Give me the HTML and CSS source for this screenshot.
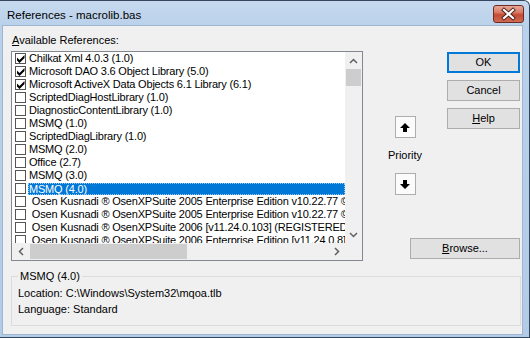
FILE: index.html
```html
<!DOCTYPE html>
<html>
<head>
<meta charset="utf-8">
<link rel="stylesheet" href="styles.css">
</head>
<body>
<div class="window">
  <div class="titlebar">
    <span class="title">References - macrolib.bas</span>
    <div class="close">
      <svg width="29" height="16" viewBox="0 0 29 16"><path d="M10 4 L19 12 M19 4 L10 12" stroke="#4a1d16" stroke-width="4" stroke-linecap="square" fill="none"/><path d="M10 4 L19 12 M19 4 L10 12" stroke="#fff" stroke-width="2.2" stroke-linecap="square" fill="none"/></svg>
    </div>
  </div>
  <div class="client">
    <div class="main">
      <div class="lbl"><u>A</u>vailable References:</div>
      <div class="listbox">
        <div class="items">
          <div class="row"><span class="cb"><svg width="8" height="8" viewBox="0 0 8 8"><polygon points="0,2.5 2.5,5 7.5,0 7.5,3 2.5,8 0,5.5" fill="#000"/></svg></span><span class="txt">Chilkat Xml 4.0.3 (1.0)</span></div>
          <div class="row"><span class="cb"><svg width="8" height="8" viewBox="0 0 8 8"><polygon points="0,2.5 2.5,5 7.5,0 7.5,3 2.5,8 0,5.5" fill="#000"/></svg></span><span class="txt">Microsoft DAO 3.6 Object Library (5.0)</span></div>
          <div class="row"><span class="cb"><svg width="8" height="8" viewBox="0 0 8 8"><polygon points="0,2.5 2.5,5 7.5,0 7.5,3 2.5,8 0,5.5" fill="#000"/></svg></span><span class="txt">Microsoft ActiveX Data Objects 6.1 Library (6.1)</span></div>
          <div class="row"><span class="cb"></span><span class="txt">ScriptedDiagHostLibrary (1.0)</span></div>
          <div class="row"><span class="cb"></span><span class="txt">DiagnosticContentLibrary (1.0)</span></div>
          <div class="row"><span class="cb"></span><span class="txt">MSMQ (1.0)</span></div>
          <div class="row"><span class="cb"></span><span class="txt">ScriptedDiagLibrary (1.0)</span></div>
          <div class="row"><span class="cb"></span><span class="txt">MSMQ (2.0)</span></div>
          <div class="row"><span class="cb"></span><span class="txt">Office (2.7)</span></div>
          <div class="row"><span class="cb"></span><span class="txt">MSMQ (3.0)</span></div>
          <div class="row sel"><span class="cb"></span><span class="txt">MSMQ (4.0)</span></div>
          <div class="row"><span class="cb"></span><span class="txt">&nbsp;Osen Kusnadi ® OsenXPSuite 2005 Enterprise Edition v10.22.77 © Osen Kusnadi (6.0)</span></div>
          <div class="row"><span class="cb"></span><span class="txt">&nbsp;Osen Kusnadi ® OsenXPSuite 2005 Enterprise Edition v10.22.77 © Osen Kusnadi (6.0)</span></div>
          <div class="row"><span class="cb"></span><span class="txt">&nbsp;Osen Kusnadi ® OsenXPSuite 2006 [v11.24.0.103] (REGISTERED) (6.0)</span></div>
          <div class="row"><span class="cb"></span><span class="txt">&nbsp;Osen Kusnadi ® OsenXPSuite 2006 Enterprise Edition [v11.24.0.8] (6.0)</span></div>
        </div>
        <div class="vscroll">
          <div class="sarrow"><svg width="9" height="6" viewBox="0 0 9 6"><polyline points="1,5 4.5,1.5 8,5" stroke="#606060" stroke-width="1.5" fill="none"/></svg></div>
          <div class="vthumb"></div>
          <div class="sarrow end"><svg width="9" height="6" viewBox="0 0 9 6"><polyline points="1,1 4.5,4.5 8,1" stroke="#606060" stroke-width="1.5" fill="none"/></svg></div>
        </div>
        <div class="hscroll">
          <div class="sarrow"><svg width="6" height="9" viewBox="0 0 6 9"><polyline points="5,1 1.5,4.5 5,8" stroke="#606060" stroke-width="1.5" fill="none"/></svg></div>
          <div class="hthumb"></div>
          <div class="sarrow end"><svg width="6" height="9" viewBox="0 0 6 9"><polyline points="1,1 4.5,4.5 1,8" stroke="#606060" stroke-width="1.5" fill="none"/></svg></div>
        </div>
        <div class="corner"></div>
      </div>
      <div class="priority">
        <div class="abtn"><svg width="10" height="9" viewBox="0 0 10 9"><polygon points="5,0 10,5 7,5 7,9 3,9 3,5 0,5" fill="#000"/></svg></div>
        <div class="plabel">Priority</div>
        <div class="abtn"><svg width="10" height="9" viewBox="0 0 10 9"><polygon points="5,9 10,4 7,4 7,0 3,0 3,4 0,4" fill="#000"/></svg></div>
      </div>
      <div class="btns">
        <div class="btn default">OK</div>
        <div class="btn">Cancel</div>
        <div class="btn"><u>H</u>elp</div>
      </div>
      <div class="btn browse"><u>B</u>rowse...</div>
    </div>
    <fieldset class="group">
      <legend>MSMQ (4.0)</legend>
      <div class="line">Location: C:\Windows\System32\mqoa.tlb</div>
      <div class="line">Language: Standard</div>
    </fieldset>
  </div>
</div>
</body>
</html>
```
FILE: styles.css
```css
* { box-sizing: border-box; }
html, body { margin: 0; padding: 0; }
body {
  width: 530px;
  height: 338px;
  overflow: hidden;
  background: #fff;
  font-family: "Liberation Sans", Arial, sans-serif;
  font-size: 11px;
  color: #000;
}
.window {
  width: 530px;
  height: 338px;
  display: flex;
  flex-direction: column;
  background: linear-gradient(180deg, #c6d9ee 0, #b9d1ea 26px, #b2cbe7 100%);
  border: 1px solid #34475d;
  border-left: none;
  border-radius: 0 6px 0 0;
}
.titlebar {
  height: 25px;
  flex: none;
  display: flex;
  align-items: flex-start;
  justify-content: space-between;
}
.title {
  padding: 6px 0 0 7px;
  font-size: 11.5px;
  line-height: 16px;
}
.close {
  margin: 4px 5px 0 0;
  width: 31px;
  height: 18px;
  border: 1px solid #6e2b22;
  border-radius: 3px;
  background: linear-gradient(180deg, #e7a898 0, #d97a66 40%, #c54a33 55%, #cf6b52 100%);
}
.close svg { display: block; }
.client {
  flex: 1;
  margin: 0 7px 3px 3px;
  background: #f0f0f0;
  padding: 8px 1px 0 8px;
  display: flex;
  flex-direction: column;
  box-shadow: 0 0 0 1px #9fb6d2;
}
.main {
  display: grid;
  grid-template-columns: 352px 84px 73px;
  grid-template-rows: 17px 210px;
}
.lbl {
  grid-column: 1;
  grid-row: 1;
  padding-left: 1px;
  line-height: 13px;
}
.listbox {
  grid-column: 1;
  grid-row: 2;
  border: 1px solid #828790;
  background: #fff;
  display: grid;
  grid-template-columns: 1fr 17px;
  grid-template-rows: 1fr 17px;
  overflow: hidden;
}
.items {
  grid-column: 1;
  grid-row: 1;
  overflow: hidden;
}
.row {
  height: 13px;
  display: flex;
  align-items: center;
  white-space: nowrap;
}
.cb {
  flex: none;
  width: 11px;
  height: 11px;
  margin-left: 3px;
  margin-right: 2px;
  border: 1px solid #555;
  background: #fff;
  display: flex;
  align-items: center;
  justify-content: center;
}
.cb svg { display: block; }
.txt {
  flex: 1;
  min-width: 0;
  height: 13px;
  line-height: 13px;
  padding-left: 1px;
  letter-spacing: -0.2px;
  overflow: hidden;
}
.sel .txt {
  background: #0078d7;
  color: #fff;
  height: 12px;
  line-height: 12px;
  outline: 1px dotted #9cc8f0;
  outline-offset: -1px;
}
.vscroll {
  grid-column: 2;
  grid-row: 1;
  background: #f0f0f0;
  display: flex;
  flex-direction: column;
}
.hscroll {
  grid-column: 1;
  grid-row: 2;
  background: #f0f0f0;
  display: flex;
}
.corner {
  grid-column: 2;
  grid-row: 2;
  background: #f0f0f0;
}
.sarrow {
  flex: none;
  width: 17px;
  height: 17px;
  display: flex;
  align-items: center;
  justify-content: center;
}
.sarrow svg { display: block; }
.sarrow.end { margin-top: auto; margin-left: auto; }
.hscroll .sarrow.end { margin-top: 0; }
.vscroll .sarrow.end { margin-left: 0; }
.vthumb {
  height: 17px;
  margin: 0 1px;
  background: #cdcdcd;
}
.hthumb {
  width: 157px;
  margin: 1px 0 1px 1px;
  background: #cdcdcd;
}
.priority {
  grid-column: 2;
  grid-row: 1 / 3;
  align-self: start;
  display: flex;
  flex-direction: column;
  align-items: center;
  padding-top: 82px;
}
.abtn {
  width: 21px;
  height: 22px;
  border: 1px solid #adadad;
  background: #fbfbfb;
  display: flex;
  align-items: center;
  justify-content: center;
}
.abtn svg { display: block; }
.plabel {
  margin: 10px 0 11px;
  line-height: 14px;
}
.btns {
  grid-column: 3;
  grid-row: 1 / 3;
  align-self: start;
  display: flex;
  flex-direction: column;
  gap: 7px;
  padding-top: 18px;
}
.btn {
  width: 73px;
  height: 21px;
  border: 1px solid #adadad;
  background: #e1e1e1;
  line-height: 19px;
  text-align: center;
}
.btn.default {
  border-color: #0078d7;
  box-shadow: inset 0 0 0 1px #0078d7;
}
.browse {
  grid-column: 2 / 4;
  grid-row: 2;
  align-self: end;
  justify-self: end;
  width: 110px;
  margin-bottom: 2px;
}
.group {
  margin: 9px 0 0 0;
  border: 1px solid #dcdcdc;
  padding: 0 6px 8px 6px;
  min-width: 0;
}
.group legend {
  padding: 0 2px;
  line-height: 13px;
}
.line { line-height: 16px; }
.group legend + .line { margin-top: 2px; }
```
